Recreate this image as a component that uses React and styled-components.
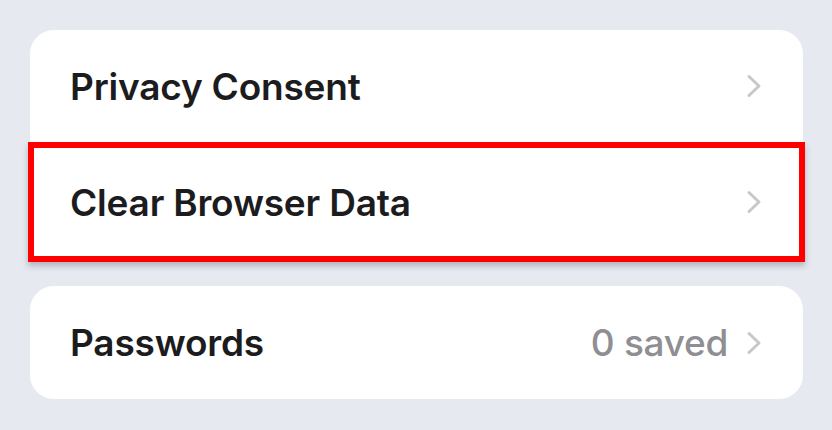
import React from 'react';
import styled, { createGlobalStyle } from 'styled-components';

const GlobalStyle = createGlobalStyle`
  html, body {
    margin: 0;
    padding: 0;
    background: #e6eaf0;
    font-family: Inter, "Noto Sans", "Liberation Sans", sans-serif;
    -webkit-font-smoothing: antialiased;
  }
`;

const Page = styled.div`
  width: 832px;
  height: 430px;
  box-sizing: border-box;
  padding: 30px 29px 0 30px;
  display: flex;
  flex-direction: column;
  gap: 24px;
`;

const Group = styled.div`
  background: #fff;
  border-radius: 24px;
  display: flex;
  flex-direction: column;
`;

const Row = styled.div`
  box-sizing: border-box;
  height: ${p => p.$height || 113}px;
  padding: 0 40px 0 40px;
  display: flex;
  align-items: center;
  gap: 18px;

  &.highlight {
    margin: 0 -2px;
    padding: 0 36px 0 36px;
    border: 6px solid #ff0000;
    box-shadow: 0 4px 6px rgba(60, 60, 70, 0.3);
    background: #fff;
  }
`;

const Label = styled.span`
  flex: 1;
  font-size: 37px;
  font-weight: 600;
  color: #1c1c1e;
  letter-spacing: -0.2px;
`;

const Value = styled.span`
  font-size: 37px;
  font-weight: 500;
  color: #8e8e93;
  letter-spacing: -0.3px;
`;

const Chevron = () => (
  <svg width="17" height="24" viewBox="0 0 17 24" fill="none">
    <path d="M3 2.5 L13 12 L3 21.5" stroke="#c7c7cc" strokeWidth="3" strokeLinecap="round" strokeLinejoin="round" />
  </svg>
);

export default function App() {
  return (
    <>
      <GlobalStyle />
      <Page>
        <Group>
          <Row $height={112}>
            <Label>Privacy Consent</Label>
            <Chevron />
          </Row>
          <Row $height={120} className="highlight">
            <Label>Clear Browser Data</Label>
            <Chevron />
          </Row>
        </Group>
        <Group>
          <Row $height={113}>
            <Label>Passwords</Label>
            <Value>0 saved</Value>
            <Chevron />
          </Row>
        </Group>
      </Page>
    </>
  );
}
